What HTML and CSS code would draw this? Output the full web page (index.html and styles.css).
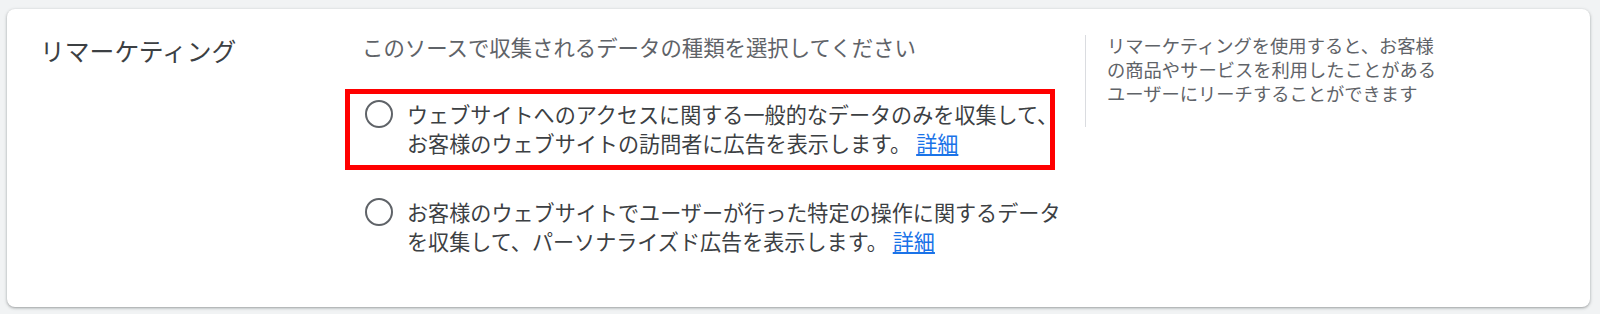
FILE: index.html
```html
<!DOCTYPE html>
<html lang="ja">
<head>
<meta charset="utf-8">
<title>リマーケティング</title>
<link rel="stylesheet" href="styles.css">
</head>
<body>
<section class="card">
  <div class="title-col">
    <h2 class="title">リマーケティング</h2>
  </div>
  <div class="main-col">
    <p class="prompt">このソースで収集されるデータの種類を選択してください</p>
    <label class="option highlighted">
      <span class="radio"></span>
      <span class="option-text">ウェブサイトへのアクセスに関する一般的なデータのみを収集して、<br>お客様のウェブサイトの訪問者に広告を表示します。<a class="more" href="#">詳細</a></span>
    </label>
    <label class="option">
      <span class="radio"></span>
      <span class="option-text">お客様のウェブサイトでユーザーが行った特定の操作に関するデータ<br>を収集して、パーソナライズド広告を表示します。<a class="more" href="#">詳細</a></span>
    </label>
  </div>
  <aside class="help-col">
    <p class="help">リマーケティングを使用すると、お客様<br>の商品やサービスを利用したことがある<br>ユーザーにリーチすることができます</p>
  </aside>
</section>
</body>
</html>
```

FILE: styles.css
```css
* { box-sizing: border-box; }

html, body {
  margin: 0;
  background: #f1f3f4;
}

body {
  padding: 9px 10px 6px 7px;
  font-family: "Noto Sans CJK JP", "Noto Sans", sans-serif;
  color: #3c4043;
}

.card {
  display: flex;
  align-items: flex-start;
  height: 298px;
  background: #ffffff;
  border-radius: 8px;
  box-shadow: 0 1px 2px rgba(60, 64, 67, 0.3), 0 1px 3px 1px rgba(60, 64, 67, 0.15);
  padding-top: 24px;
}

.title-col {
  width: 338px;
  flex: none;
  padding-left: 33px;
}

.title {
  margin: 0;
  font-size: 24.8px;
  line-height: 34px;
  font-weight: 400;
  color: #3c4043;
}

.main-col {
  width: 740px;
  flex: none;
  display: flex;
  flex-direction: column;
}

.prompt {
  margin: 0 0 28px 17px;
  font-size: 21.4px;
  line-height: 28px;
  color: #5f6368;
}

.option {
  display: flex;
  align-items: flex-start;
  gap: 14px;
  width: 710px;
  padding: 6px 10px 7px 15px;
  border: 5px solid transparent;
  font-size: 21.1px;
  line-height: 29px;
  color: #3c4043;
}

.option + .option {
  margin-top: 17px;
}

.option.highlighted {
  border-color: #ff0000;
}

.radio {
  flex: none;
  width: 28px;
  height: 28px;
  margin-top: 0;
  border: 2.5px solid #5f6368;
  border-radius: 50%;
}

.option-text {
  white-space: nowrap;
}

.more {
  margin-left: 5px;
  color: #1a73e8;
  text-decoration: underline;
}

.help-col {
  flex: none;
  height: 92px;
  margin-top: 2px;
  border-left: 1px solid #dadce0;
  padding-left: 21px;
}

.help {
  margin: -2px 0 0 0;
  font-size: 18.3px;
  line-height: 24px;
  color: #5f6368;
}
```
